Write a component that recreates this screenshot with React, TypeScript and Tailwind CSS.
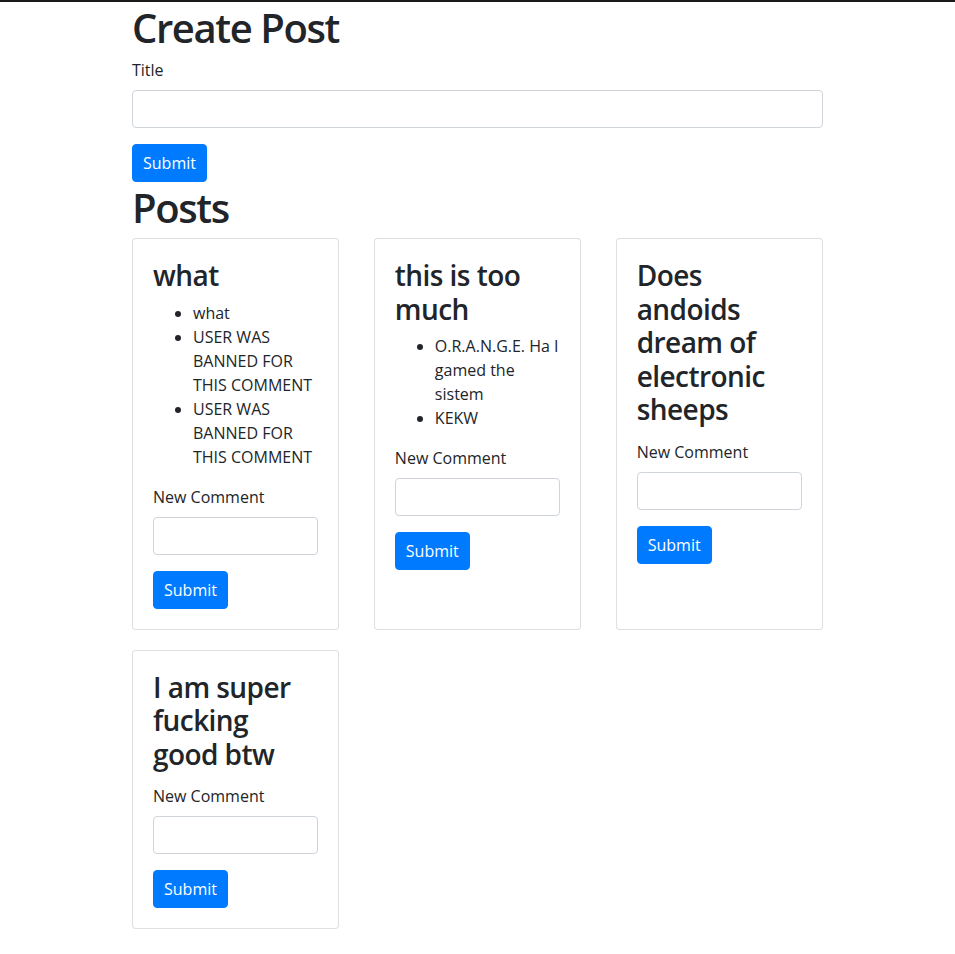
import { useState } from "react";

interface Post {
    id: string;
    title: string;
    comments: string[];
}

const posts: Post[] = [
    { id: "1", title: "what", comments: ["what", "USER WAS BANNED FOR THIS COMMENT", "USER WAS BANNED FOR THIS COMMENT"] },
    { id: "2", title: "this is too much", comments: ["O.R.A.N.G.E. Ha I gamed the sistem", "KEKW"] },
    { id: "3", title: "Does andoids dream of electronic sheeps", comments: [] },
    { id: "4", title: "I am super fucking good btw", comments: [] },
];

const inputClass =
    "block w-full h-[38px] px-3 border border-[#ced4da] rounded-[4px] bg-white text-base text-[#495057] outline-none focus:border-[#80bdff]";
const buttonClass =
    "h-[38px] px-[10px] bg-[#007bff] text-white text-base leading-6 rounded-[4px] border border-[#007bff] hover:bg-[#0069d9]";

const PostCard = ({ post }: { post: Post }) => {
    const [comment, setComment] = useState("");

    return (
        <div className="w-[30%] mb-5 border border-[rgba(0,0,0,0.125)] rounded-[4px] bg-white">
            <div className="p-5">
                <h3 className="text-[28px] leading-[1.2] font-semibold tracking-[-0.02em] mb-2">{post.title}</h3>
                {post.comments.length > 0 ? (
                    <ul className="list-disc pl-10 mb-4">
                        {post.comments.map((c, i) => (
                            <li key={i} className="leading-6">{c}</li>
                        ))}
                    </ul>
                ) : (
                    <div className="h-[5px]" />
                )}
                <form onSubmit={(e) => { e.preventDefault(); setComment(""); }}>
                    <div className="mb-4">
                        <label className="block mb-2 leading-6">New Comment</label>
                        <input
                            type="text"
                            value={comment}
                            onChange={(e) => setComment(e.target.value)}
                            className={inputClass}
                        />
                    </div>
                    <button type="submit" className={buttonClass}>Submit</button>
                </form>
            </div>
        </div>
    );
};

const App = () => {
    const [title, setTitle] = useState("");

    return (
        <div className="min-h-screen bg-white text-[#212529] text-base leading-6 font-['Segoe_UI','Open_Sans',sans-serif]">
            <div className="h-[2px] bg-[#1a1a1a]" />
            <div className="w-[691px] mx-auto">
                <h1 className="pt-[2px] text-[40px] leading-[1.2] font-semibold tracking-[-0.035em] mb-[6px]">Create Post</h1>
                <form onSubmit={(e) => { e.preventDefault(); setTitle(""); }}>
                    <div className="mb-4">
                        <label className="block mb-2 leading-6">Title</label>
                        <input
                            type="text"
                            value={title}
                            onChange={(e) => setTitle(e.target.value)}
                            className={inputClass}
                        />
                    </div>
                    <button type="submit" className={buttonClass}>Submit</button>
                </form>

                <h1 className="text-[40px] leading-[1.2] font-semibold tracking-[-0.035em] mt-[2px] mb-[6px]">Posts</h1>
                <div className="flex flex-wrap justify-between after:content-[''] after:w-[30%]">
                    {posts.map((post) => (
                        <PostCard key={post.id} post={post} />
                    ))}
                </div>
            </div>
        </div>
    );
};

export default App;
